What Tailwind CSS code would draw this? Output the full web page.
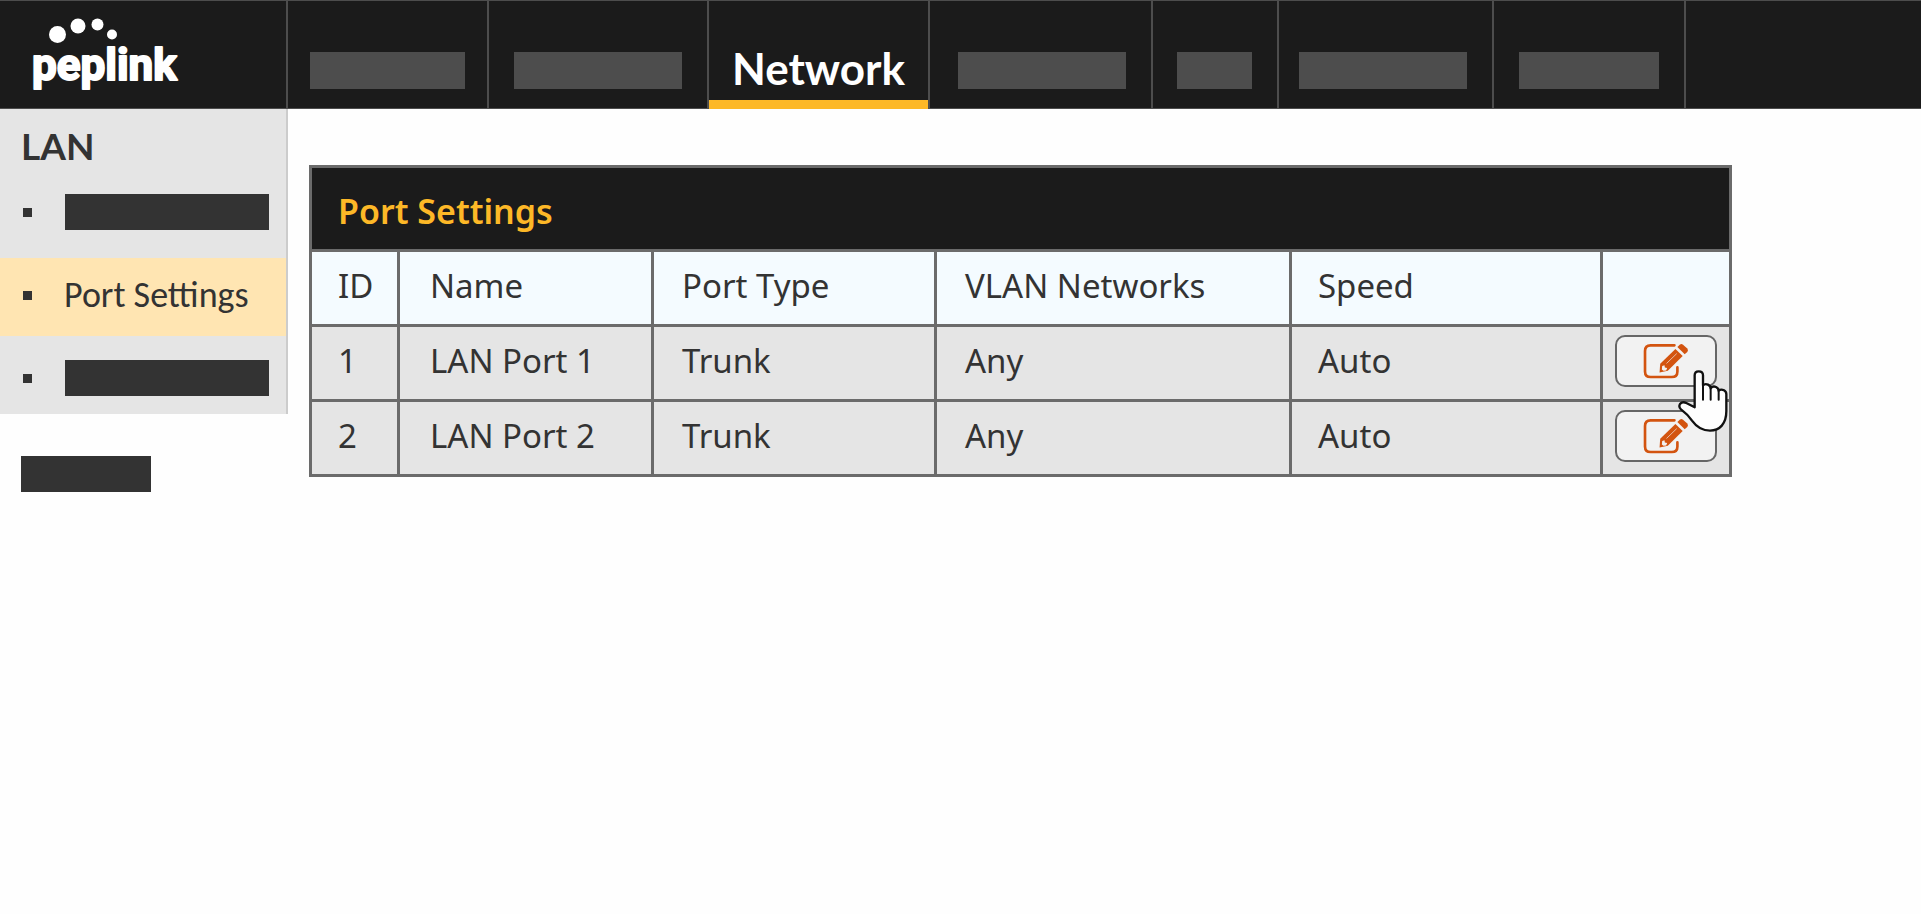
<!DOCTYPE html>
<html lang="en">
<head>
<meta charset="utf-8">
<meta name="viewport" content="width=device-width, initial-scale=1">
<title>Port Settings</title>
<script src="https://cdn.jsdelivr.net/npm/@tailwindcss/browser@4"></script>
</head>
<body class="min-h-screen bg-[#fefefe] font-['Noto_Sans',sans-serif] text-[#333]">
<svg class="hidden" aria-hidden="true">
  <symbol id="edit" viewBox="160 95 145 115">
    <path d="M258 105H186Q169 105 169 122V184Q169 201 186 201H250Q267 201 267 184V172" fill="none" stroke="#d35410" stroke-width="8" stroke-linecap="round"/>
    <path d="M213 187L215 161L261 116L283 137L238 182Z" fill="#d35410"/>
    <path d="M267 110L274 103Q279 99 284 103L297 115Q301 120 297 125L289 132Z" fill="#d35410"/>
    <path d="M221 168L228 165L229 172L236 174L233 181L225 182L220 178Z" fill="#f2f2f2"/>
    <path d="M234 160L265 130" stroke="#f2f2f2" stroke-width="2"/>
  </symbol>
</svg>

<header class="flex h-[109px] border-y border-[#4d4d4d] bg-[#1b1b1b]">
  <a href="#" class="block w-[286px] shrink-0" aria-label="peplink">
    <svg class="h-[107px] w-[286px]" viewBox="0 1 286 107" fill="#fff">
      <circle cx="57.5" cy="34.5" r="8.5"/>
      <circle cx="78" cy="26" r="7.5"/>
      <circle cx="97.5" cy="24.5" r="6"/>
      <circle cx="112" cy="34.5" r="5"/>
      <text x="32" y="80" class="font-['Roboto',sans-serif] text-[44px] font-bold" stroke="#fff" stroke-width="2" stroke-linejoin="round">peplink</text>
    </svg>
  </a>
  <nav class="flex grow" aria-label="Main">
    <a href="#" aria-label="Menu 1" class="flex items-end border-l-2 border-[#4d4d4d] px-[22px] pb-[19px]"><span class="h-[37px] w-[155px] bg-[#4d4d4d]"></span></a>
    <a href="#" aria-label="Menu 2" class="flex items-end border-l-2 border-[#4d4d4d] px-[25px] pb-[19px]"><span class="h-[37px] w-[168px] bg-[#4d4d4d]"></span></a>
    <a href="#" aria-current="page" class="-mb-px flex w-[221px] flex-col border-l-2 border-[#4d4d4d] font-['Lato',sans-serif] text-[44px] leading-[52px] font-bold text-white"><span class="flex grow items-end justify-center pb-[6px]">Network</span><span class="h-[9px] bg-[#fdb827]"></span></a>
    <a href="#" aria-label="Menu 4" class="flex items-end border-l-2 border-[#4d4d4d] pr-[25px] pl-7 pb-[19px]"><span class="h-[37px] w-[168px] bg-[#4d4d4d]"></span></a>
    <a href="#" aria-label="Menu 5" class="flex items-end border-l-2 border-[#4d4d4d] pr-[25px] pl-6 pb-[19px]"><span class="h-[37px] w-[75px] bg-[#4d4d4d]"></span></a>
    <a href="#" aria-label="Menu 6" class="flex items-end border-l-2 border-[#4d4d4d] pr-[25px] pl-5 pb-[19px]"><span class="h-[37px] w-[168px] bg-[#4d4d4d]"></span></a>
    <a href="#" aria-label="Menu 7" class="flex items-end border-x-2 border-[#4d4d4d] px-[25px] pb-[19px]"><span class="h-[37px] w-[140px] bg-[#4d4d4d]"></span></a>
  </nav>
</header>

<div class="flex items-start">
  <aside class="w-[288px] shrink-0 font-['Carlito','Lato',sans-serif]">
    <div class="border-r-2 border-[#ccc] bg-[#e5e5e5] pb-[18px]">
      <h2 class="px-[21px] pt-[15px] font-['Lato',sans-serif] text-[37px] leading-[44px] font-bold">LAN</h2>
      <ul>
        <li><a href="#" aria-label="Item 1" class="flex h-[90px] items-center pl-[23px] pb-[2px]"><span class="mr-[33px] size-[9px] bg-[#333]"></span><span class="h-9 w-[204px] bg-[#333]"></span></a></li>
        <li><a href="#" aria-current="page" class="flex h-[78px] items-center bg-[#ffe5b2] pb-1 pl-[23px] text-[36px] leading-[40px]"><span class="mr-[32px] size-[9px] bg-[#333]"></span>Port Settings</a></li>
        <li><a href="#" aria-label="Item 3" class="flex items-center pt-6 pl-[23px]"><span class="mr-[33px] size-[9px] bg-[#333]"></span><span class="h-9 w-[204px] bg-[#333]"></span></a></li>
      </ul>
    </div>
    <a href="#" aria-label="Item 4" class="mt-[42px] ml-[21px] block h-9 w-[130px] bg-[#333]"></a>
  </aside>

  <main class="grow pt-14 pr-[189px] pl-[21px]">
    <table class="w-full table-fixed border-collapse text-left text-[33px] leading-[40px] [&_td]:border-3 [&_td]:border-[#6b6b6b] [&_td]:pb-1 [&_th]:border-3 [&_th]:border-[#6b6b6b] [&_th]:pb-1 [&_th]:font-normal">
      <colgroup>
        <col class="w-[88px]"><col class="w-[254px]"><col class="w-[283px]"><col><col class="w-[311px]"><col class="w-[129px]">
      </colgroup>
      <thead>
        <tr class="h-[84px] bg-[#1b1b1b] text-[34px] text-[#fdb827]"><th colspan="6" scope="colgroup" class="pt-2 pl-[26px]"><span class="font-semibold">Port Settings</span></th></tr>
        <tr class="h-[75px] bg-[#f4fbff]">
          <th scope="col" class="pl-[26px]">ID</th><th scope="col" class="pl-[30px]">Name</th><th scope="col" class="pl-7">Port Type</th><th scope="col" class="pl-7">VLAN Networks</th><th scope="col" class="pl-[26px]">Speed</th><td></td>
        </tr>
      </thead>
      <tbody class="bg-[#e5e5e5]">
        <tr class="h-[75px]">
          <td class="pl-[26px]">1</td><td class="pl-[30px]">LAN Port 1</td><td class="pl-7">Trunk</td><td class="pl-7">Any</td><td class="pl-[26px]">Auto</td>
          <td><div class="relative flex justify-center">
            <button type="button" aria-label="Edit LAN Port 1" class="flex h-[52px] w-[102px] items-center justify-center rounded-[10px] border-2 border-[#666] bg-[#f2f2f2]"><svg class="h-[38px] w-[48px]"><use href="#edit"/></svg></button>
            <svg class="pointer-events-none absolute top-[34px] right-0 z-10 h-[64px] w-[52px]" viewBox="262 173 156 192" aria-hidden="true">
              <path d="M315 288V192Q315 180 327 180Q340 180 340 192V222Q346 216 355 220Q363 224 363 231Q369 223 379 227Q387 231 387 238Q394 232 403 237Q410 241 410 249V300C410 337 390 358 361 358C335 358 320 346 307 328C298 314 286 303 274 294Q266 287 271 278Q278 269 290 275Z" fill="#fefefe" stroke="#111" stroke-width="7" stroke-linejoin="round"/>
              <path d="M340 220V265M363 229V265M387 236V265" fill="none" stroke="#111" stroke-width="6" stroke-linecap="round"/>
            </svg>
          </div></td>
        </tr>
        <tr class="h-[75px]">
          <td class="pl-[26px]">2</td><td class="pl-[30px]">LAN Port 2</td><td class="pl-7">Trunk</td><td class="pl-7">Any</td><td class="pl-[26px]">Auto</td>
          <td><div class="flex justify-center">
            <button type="button" aria-label="Edit LAN Port 2" class="flex h-[52px] w-[102px] items-center justify-center rounded-[10px] border-2 border-[#666] bg-[#f2f2f2]"><svg class="h-[38px] w-[48px]"><use href="#edit"/></svg></button>
          </div></td>
        </tr>
      </tbody>
    </table>
  </main>
</div>
</body>
</html>
